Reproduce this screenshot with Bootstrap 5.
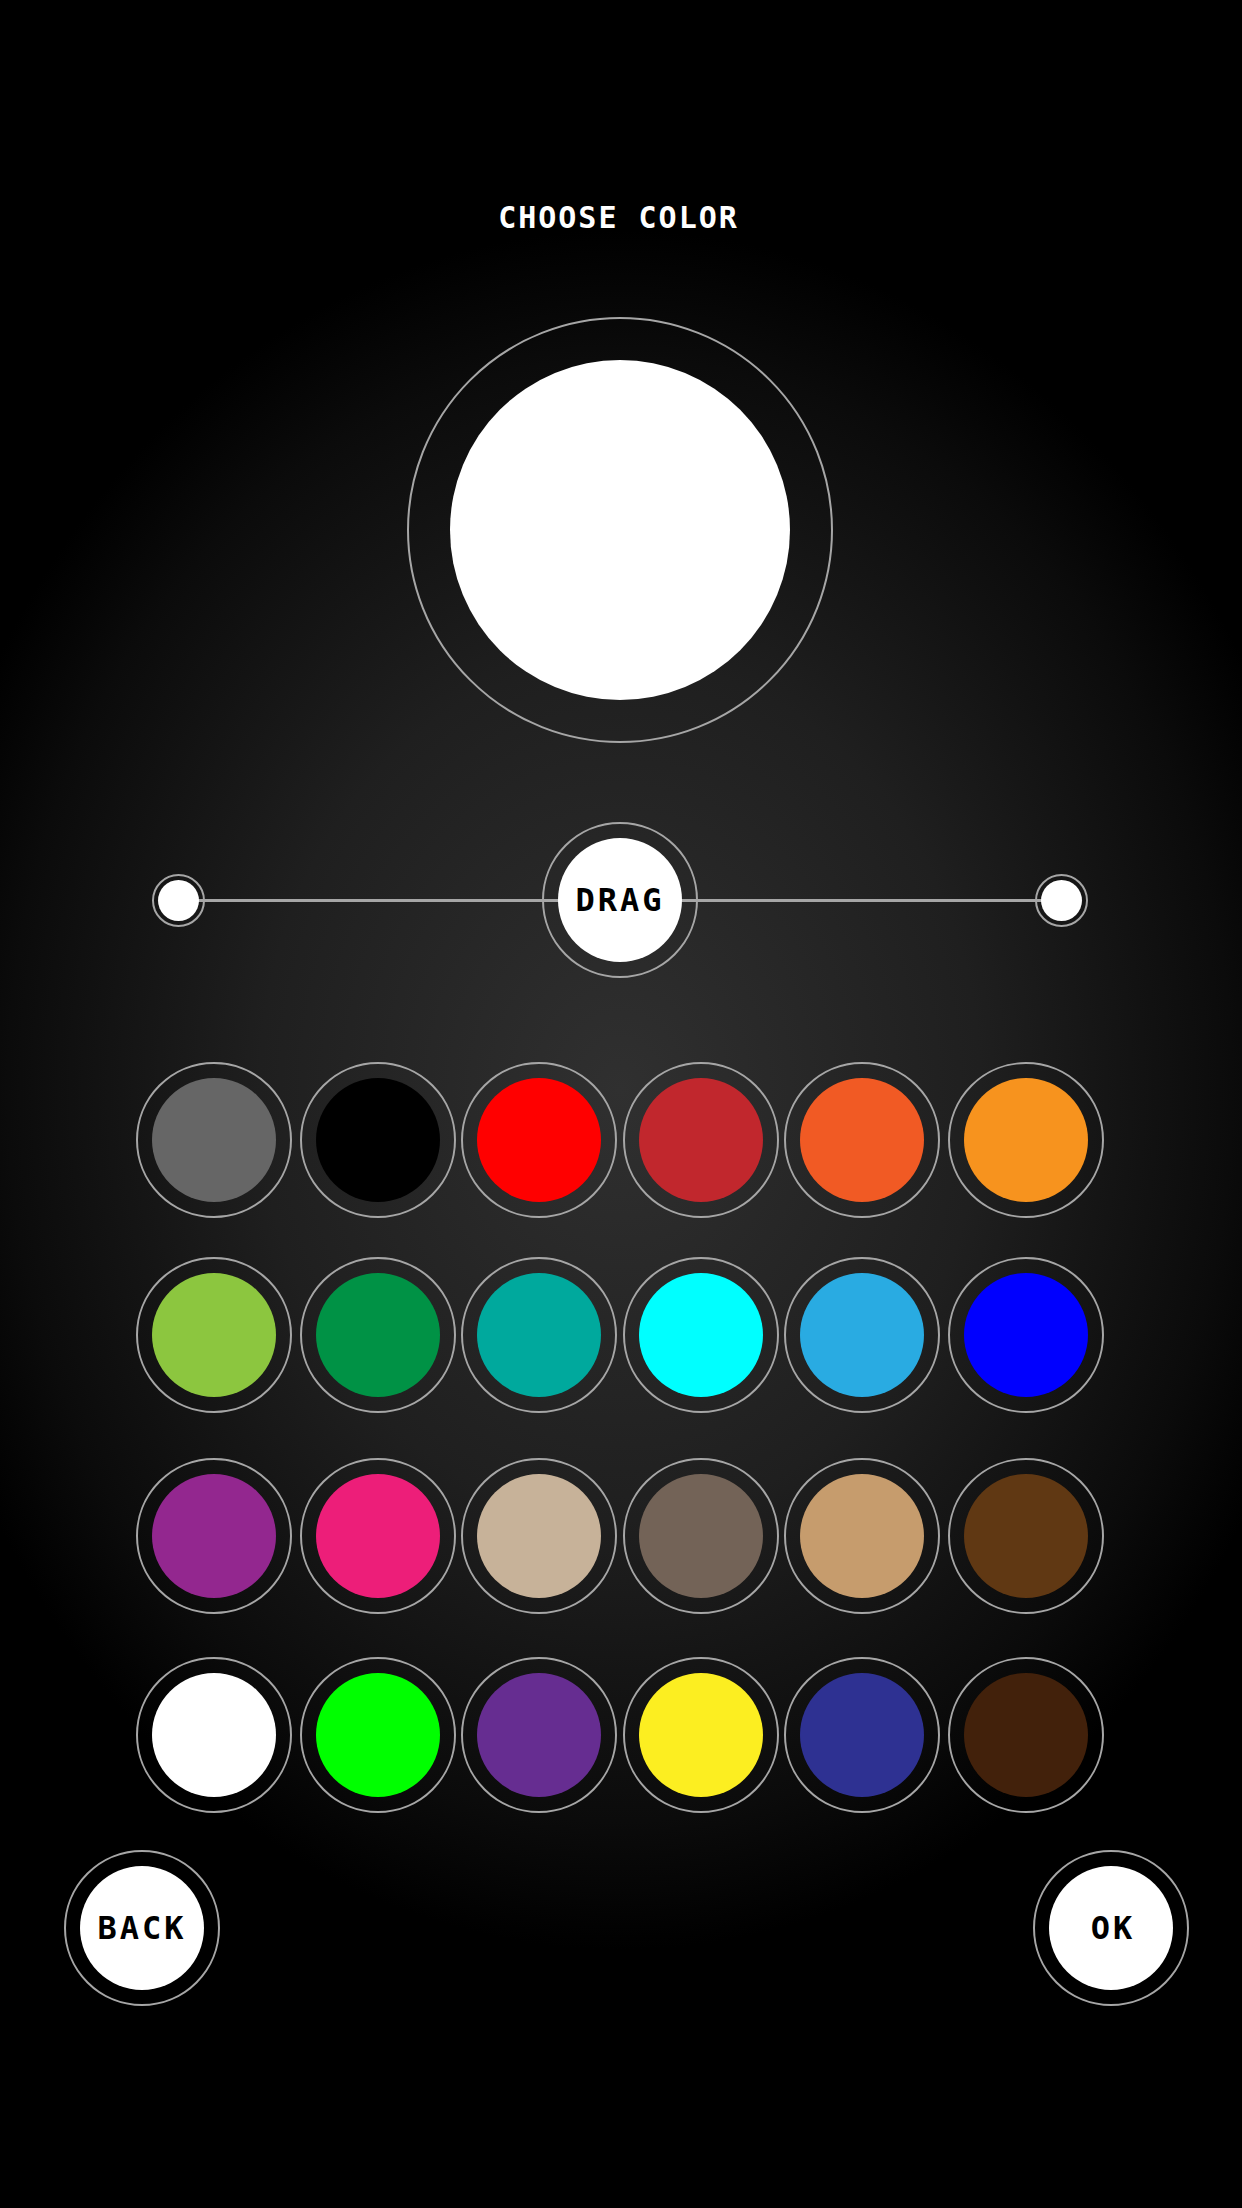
<!DOCTYPE html>
<html>

<head>
  <link href="https://cdn.jsdelivr.net/npm/bootstrap@5.3.2/dist/css/bootstrap.min.css" rel="stylesheet" type="text/css" />
  <script src="https://cdn.jsdelivr.net/npm/bootstrap@5.3.2/dist/js/bootstrap.bundle.min.js"></script>
  <style>
    body {
      width: 1242px;
      height: 2208px;
      overflow: hidden;
      background: radial-gradient(ellipse 720px 860px at 620px 1090px, #303030 0%, #1f1f1f 50%, #0b0b0b 85%, #000 100%);
      font-family: "DejaVu Sans Mono", "Liberation Mono", monospace;
      font-weight: 700;
      font-size: 32px;
      letter-spacing: 3px;
    }

    .screen-title {
      height: 40px;
      line-height: 40px;
      margin: 198px 0 79px;
      padding-right: 5px;
      color: #fff;
      font-size: 30px;
      letter-spacing: 2px;
    }

    .dial {
      width: 156px;
      height: 156px;
      border: 2px solid #a6a6a6;
      color: #000;
    }

    .dial-fill {
      width: 124px;
      height: 124px;
      background: #fff;
    }

    .big-dial-wrap {
      padding-right: 2px;
    }

    .dial-big {
      width: 426px;
      height: 426px;
    }

    .dial-big .dial-fill {
      width: 340px;
      height: 340px;
    }

    .dial-knob {
      width: 53px;
      height: 53px;
    }

    .dial-knob .dial-fill {
      width: 41px;
      height: 41px;
    }

    .drag-track {
      width: 936px;
      margin: 79px 0 84px 152px;
      background: linear-gradient(#a6a6a6, #a6a6a6) center / calc(100% - 53px) 3px no-repeat;
    }

    .swatch-grid {
      display: grid;
      grid-template-columns: 164px 161px 162px 161px 164px 156px;
      padding-left: 136px;
    }

    #row2 { margin-top: 39px; }
    #row3 { margin-top: 45px; }
    #row4 { margin-top: 43px; }

    .nav-buttons {
      margin-top: 37px;
      padding: 0 53px 0 64px;
    }
  </style>
</head>

<body>
  <main>
    <div class="screen-title text-center">CHOOSE COLOR</div>

    <div class="big-dial-wrap d-flex justify-content-center">
      <div class="dial dial-big rounded-circle d-flex align-items-center justify-content-center">
        <div class="dial-fill rounded-circle"></div>
      </div>
    </div>

    <div class="drag-track d-flex align-items-center justify-content-between">
      <div class="dial dial-knob rounded-circle d-flex align-items-center justify-content-center">
        <div class="dial-fill rounded-circle"></div>
      </div>
      <div class="dial rounded-circle d-flex align-items-center justify-content-center">
        <div class="dial-fill rounded-circle d-flex align-items-center justify-content-center">DRAG</div>
      </div>
      <div class="dial dial-knob rounded-circle d-flex align-items-center justify-content-center">
        <div class="dial-fill rounded-circle"></div>
      </div>
    </div>

    <div id="row1" class="swatch-grid"></div>
    <div id="row2" class="swatch-grid"></div>
    <div id="row3" class="swatch-grid"></div>
    <div id="row4" class="swatch-grid"></div>

    <div class="nav-buttons d-flex justify-content-between">
      <div class="dial rounded-circle d-flex align-items-center justify-content-center">
        <div class="dial-fill rounded-circle d-flex align-items-center justify-content-center">BACK</div>
      </div>
      <div class="dial rounded-circle d-flex align-items-center justify-content-center">
        <div class="dial-fill rounded-circle d-flex align-items-center justify-content-center ps-1">OK</div>
      </div>
    </div>
  </main>

  <script>
    const swatchRows = [
      ["#666666", "#000000", "#ff0000", "#c1272d", "#f15a24", "#f7931e"],
      ["#8cc63f", "#009245", "#00a99d", "#00ffff", "#29abe2", "#0000ff"],
      ["#93278f", "#ed1e79", "#c7b299", "#736357", "#c69c6d", "#603813"],
      ["#ffffff", "#00ff00", "#662d91", "#fcee21", "#2e3192", "#42210b"]
    ]

    for (let i = 0; i < swatchRows.length; i++) {
      const row = document.querySelector("#row" + (i + 1))
      for (let j = 0; j < swatchRows[i].length; j++) {
        const dial = document.createElement("div")
        dial.className = "dial rounded-circle d-flex align-items-center justify-content-center"
        const fill = document.createElement("div")
        fill.className = "dial-fill rounded-circle"
        fill.style.background = swatchRows[i][j]
        dial.appendChild(fill)
        row.appendChild(dial)
      }
    }
  </script>
</body>

</html>
